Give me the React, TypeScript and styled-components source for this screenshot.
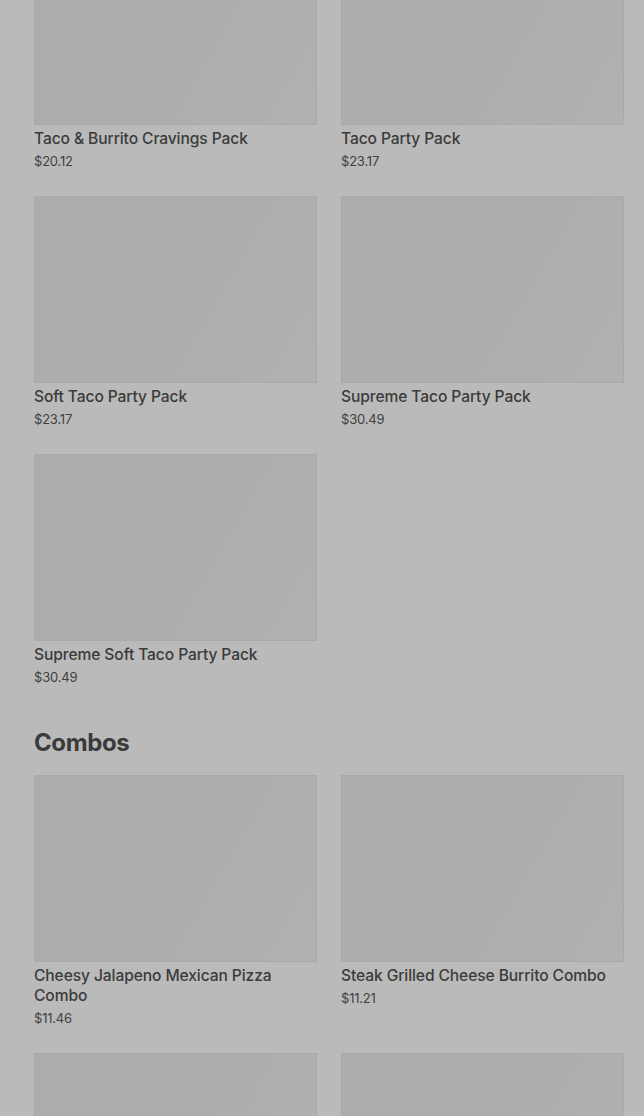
import React from 'react';
import styled, { createGlobalStyle } from 'styled-components';

const GlobalStyle = createGlobalStyle`
  html, body {
    margin: 0;
    padding: 0;
    background: #bababa;
  }
  body {
    font-family: Inter, "Noto Sans", "Liberation Sans", sans-serif;
    -webkit-font-smoothing: antialiased;
  }
`;

const Page = styled.div`
  width: 644px;
  height: 1116px;
  overflow: hidden;
  background: #bababa;
`;

// the menu is scrolled: the first row's photo is cut off at the top
const Scroller = styled.div`
  margin-top: -62px;
  padding: 0 20px 0 34px;
`;

const Section = styled.section`
  display: flex;
  flex-direction: column;
`;

const SectionTitle = styled.h2`
  margin: 40px 0 16px;
  font-size: 24px;
  line-height: 32px;
  font-weight: 700;
  color: #3a3a3a;
  letter-spacing: -0.4px;
`;

const Grid = styled.div`
  display: grid;
  grid-template-columns: 1fr 1fr;
  column-gap: 24px;
  row-gap: 25px;
`;

const Card = styled.div`
  display: flex;
  flex-direction: column;
`;

const Photo = styled.div`
  height: 187px;
  box-sizing: border-box;
  border: 1px solid #a9a9a9;
  background: linear-gradient(120deg, #adadad 0%, #adadad 55%, #b1b1b1 100%);
`;

const Name = styled.div`
  margin-top: 4px;
  font-size: 15.6px;
  line-height: 20px;
  font-weight: 500;
  color: #3b3b3b;
  letter-spacing: -0.1px;
`;

const Price = styled.div`
  margin-top: 2px;
  font-size: 13px;
  line-height: 20px;
  color: #414141;
  letter-spacing: -0.2px;
`;

interface Item {
  name?: string;
  price?: string;
}

const packs: Item[] = [
  { name: 'Taco & Burrito Cravings Pack', price: '$20.12' },
  { name: 'Taco Party Pack', price: '$23.17' },
  { name: 'Soft Taco Party Pack', price: '$23.17' },
  { name: 'Supreme Taco Party Pack', price: '$30.49' },
  { name: 'Supreme Soft Taco Party Pack', price: '$30.49' },
];

// the last row is only visible down to its photos
const combos: Item[] = [
  { name: 'Cheesy Jalapeno Mexican Pizza Combo', price: '$11.46' },
  { name: 'Steak Grilled Cheese Burrito Combo', price: '$11.21' },
  {},
  {},
];

const ItemCard: React.FC<{ item: Item }> = ({ item }) => (
  <Card>
    <Photo />
    {item.name && <Name>{item.name}</Name>}
    {item.price && <Price>{item.price}</Price>}
  </Card>
);

export default function App() {
  return (
    <Page>
      <GlobalStyle />
      <Scroller>
        <Section>
          <Grid>
            {packs.map((p, i) => (
              <ItemCard key={i} item={p} />
            ))}
          </Grid>
        </Section>
        <Section>
          <SectionTitle>Combos</SectionTitle>
          <Grid>
            {combos.map((c, i) => (
              <ItemCard key={i} item={c} />
            ))}
          </Grid>
        </Section>
      </Scroller>
    </Page>
  );
}
